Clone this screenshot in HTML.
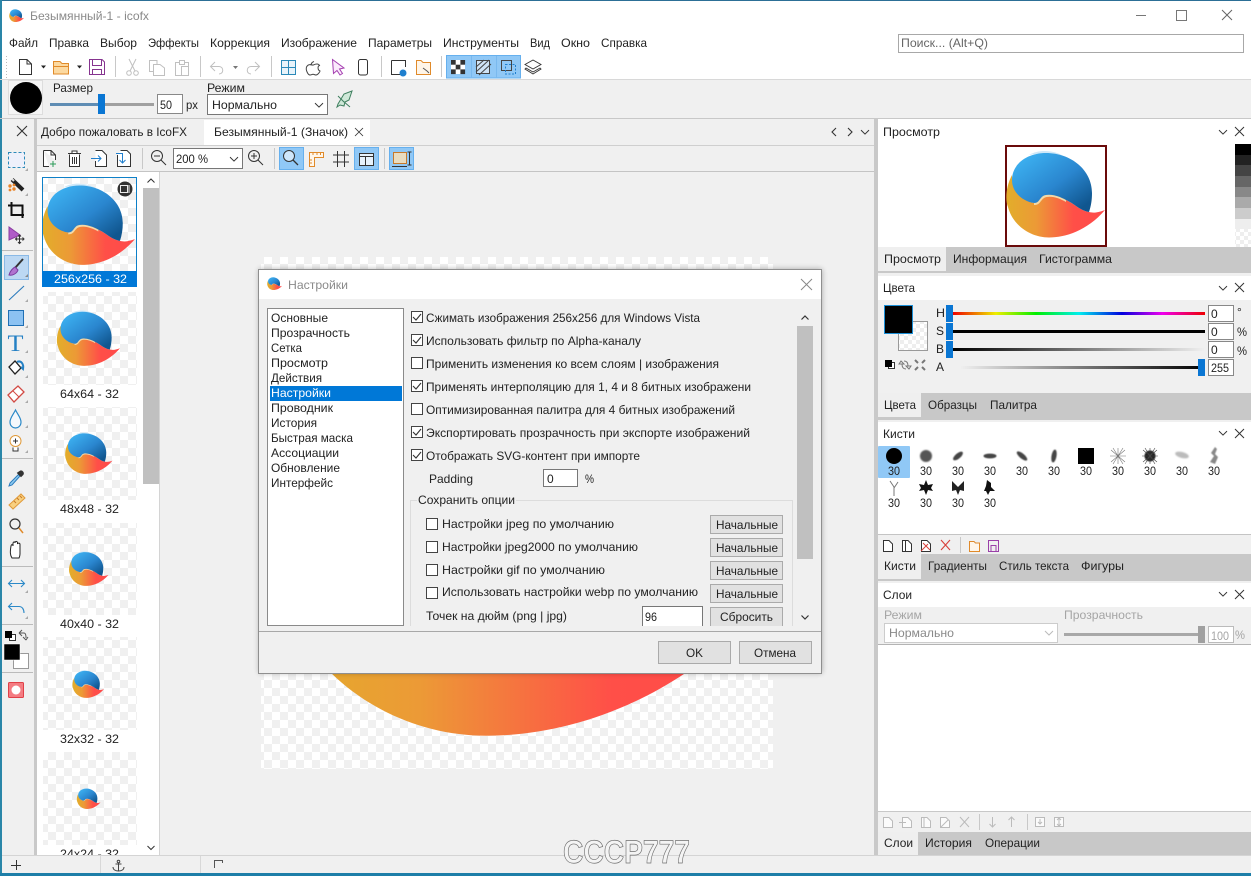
<!DOCTYPE html>
<html lang="ru"><head><meta charset="utf-8"><title>icofx</title>
<style>
html,body{margin:0;padding:0;background:#f0f0f0;overflow:hidden}
svg{display:block;position:absolute;left:0;top:0}
text{font-family:"Liberation Sans",sans-serif;font-size:12px;fill:#222;white-space:pre}
.g{fill:#a5a5a5}
.i{fill:none;stroke:#333;stroke-width:1}
</style></head><body>
<svg width="1251" height="876" viewBox="0 0 1251 876" xmlns="http://www.w3.org/2000/svg">
<defs>
<linearGradient id="bl" x1="0.1" y1="0.1" x2="0.9" y2="0.9"><stop offset="0" stop-color="#3cb0f0"/><stop offset=".55" stop-color="#2a86cf"/><stop offset="1" stop-color="#10568f"/></linearGradient>
<linearGradient id="or" x1="0" y1="0" x2="1" y2="0"><stop offset="0" stop-color="#e2ae2a"/><stop offset=".3" stop-color="#ec9a36"/><stop offset=".68" stop-color="#ff4f48"/><stop offset="1" stop-color="#ff4a4a"/></linearGradient>
<symbol id="logo" viewBox="0 0 100 100">
<path fill="url(#or)" d="M7 31C1 42 0 56 3 63C8 82 26 93.500 44 93.500C60 93.500 82 87 100 66C92 69 88 69 84 68C74 66 70 60 61 56C54 52 44 49 38 52C34 55 34 59 29 59C22 58 8 50 7 31Z"/>
<path fill="#f3d9a8" d="M29 59C34 59 34 55 38 52C44 49 54 52 61 56L61 58C54 54 45 51 39 54C35 57 35 61 29 61Z"/>
<path fill="#cfe8f8" d="M24 11C34 5 50 6 60 13C50 9 36 9 24 11Z"/>
<path fill="url(#bl)" d="M7 36C7 20 22 9 41 9C66 9 87 26 87 49C87 56 86 62 84 68C74 66 70 60 61 56C54 52 44 49 38 52C34 55 34 59 29 59C20 58 7 50 7 36Z"/>
</symbol>
<pattern id="ck" width="16" height="16" patternUnits="userSpaceOnUse"><rect width="16" height="16" fill="#fff"/><rect width="8" height="8" fill="#f0f0f0"/><rect x="8" y="8" width="8" height="8" fill="#f0f0f0"/></pattern>
<pattern id="ck2" width="16" height="16" patternUnits="userSpaceOnUse"><rect width="16" height="16" fill="#f0f0f0"/><rect x="8" width="8" height="8" fill="#fff"/><rect y="8" width="8" height="8" fill="#fff"/></pattern>
<pattern id="ck3" width="8" height="8" patternUnits="userSpaceOnUse"><rect width="8" height="8" fill="#fff"/><rect width="4" height="4" fill="#eee"/><rect x="4" y="4" width="4" height="4" fill="#eee"/></pattern>
<linearGradient id="rb"><stop offset="0" stop-color="#e00"/><stop offset=".17" stop-color="#ee0"/><stop offset=".33" stop-color="#0e0"/><stop offset=".5" stop-color="#0ee"/><stop offset=".67" stop-color="#00d"/><stop offset=".83" stop-color="#e0e"/><stop offset="1" stop-color="#e00"/></linearGradient>
<linearGradient id="bw"><stop offset="0" stop-color="#000"/><stop offset="1" stop-color="#f0f0f0"/></linearGradient>
<linearGradient id="wb"><stop offset="0" stop-color="#f0f0f0"/><stop offset="1" stop-color="#000"/></linearGradient>
<filter id="b1" x="-50%" y="-50%" width="200%" height="200%"><feGaussianBlur stdDeviation=".9"/></filter>
<filter id="b2" x="-50%" y="-50%" width="200%" height="200%"><feGaussianBlur stdDeviation=".5"/></filter>
<filter id="sh" x="-5%" y="-5%" width="110%" height="110%"><feGaussianBlur stdDeviation="3"/></filter>
<symbol id="chv" viewBox="0 0 10 6" overflow="visible"><path d="M0 0L5 5L10 0" fill="none" stroke="#333" stroke-width="1.2"/></symbol>
<symbol id="xx" viewBox="0 0 10 10" overflow="visible"><path d="M0 0L10 10M10 0L0 10" fill="none" stroke="#333" stroke-width="1.1"/></symbol>
<path id="doc" d="M.5 .5H8L12.5 5V15.5H.5ZM8 .5V5H12.5" fill="#fff" stroke="#333"/>
</defs>

<!-- window -->
<rect width="1251" height="876" fill="#f0f0f0"/>
<rect width="1251" height="79" fill="#fff"/>
<rect width="1251" height="1" fill="#2c6f96"/>
<rect y="0" width="2" height="876" fill="#2a86a8"/>
<rect y="873" width="1251" height="3" fill="#1d7ea8"/>

<!-- title -->
<use href="#logo" x="9" y="8" width="15" height="15"/>
<text x="30" y="20" fill="#8a8a8a" style="fill:#8a8a8a" textLength="119" lengthAdjust="spacingAndGlyphs">Безымянный-1 - icofx</text>
<path d="M1136 15.5H1146" stroke="#777"/>
<rect x="1176.5" y="10.5" width="10" height="10" fill="none" stroke="#777"/>
<path d="M1222 10L1232 20M1232 10L1222 20" stroke="#666" fill="none"/>

<!-- menu -->
<g>
<text x="9" y="47" textLength="29" lengthAdjust="spacingAndGlyphs">Файл</text>
<text x="49" y="47" textLength="40" lengthAdjust="spacingAndGlyphs">Правка</text>
<text x="100" y="47" textLength="37" lengthAdjust="spacingAndGlyphs">Выбор</text>
<text x="148" y="47" textLength="51" lengthAdjust="spacingAndGlyphs">Эффекты</text>
<text x="210" y="47" textLength="60" lengthAdjust="spacingAndGlyphs">Коррекция</text>
<text x="281" y="47" textLength="76" lengthAdjust="spacingAndGlyphs">Изображение</text>
<text x="368" y="47" textLength="64" lengthAdjust="spacingAndGlyphs">Параметры</text>
<text x="443" y="47" textLength="76" lengthAdjust="spacingAndGlyphs">Инструменты</text>
<text x="530" y="47" textLength="20" lengthAdjust="spacingAndGlyphs">Вид</text>
<text x="561" y="47" textLength="29" lengthAdjust="spacingAndGlyphs">Окно</text>
<text x="601" y="47" textLength="46" lengthAdjust="spacingAndGlyphs">Справка</text>
</g>
<rect x="898.5" y="34.5" width="345" height="18" fill="#fff" stroke="#a8a8a8"/>
<text x="901" y="47" style="fill:#666" textLength="87" lengthAdjust="spacingAndGlyphs">Поиск... (Alt+Q)</text>

<!-- main toolbar -->
<path d="M6.5 56V78" stroke="#bbb" stroke-dasharray="1 2"/>
<use href="#doc" x="19" y="59"/>
<path d="M41 65.500H46L43.500 68.500Z M77 65.500H82L79.500 68.500Z" fill="#222"/>
<path d="M53.500 61.500H60L62 63.500H68.500V74H53.500Z" fill="#fcd9a0" stroke="#e08a2a"/><path d="M53.500 66.500H68.500" stroke="#e08a2a"/>
<path d="M89.500 59.500H102L104.500 62V74.500H89.500Z" fill="#fff" stroke="#86348f"/><path d="M92.500 59.500V65.500H101.500V59.500M92.500 74.500V69.500H101.500V74.500" fill="none" stroke="#86348f"/>
<path d="M115.500 56V77M200.500 56V77M271.500 56V77M381.500 56V77M441.500 56V77" stroke="#c8c8c8"/>
<g fill="none" stroke="#c0c0c0"><path d="M129 59L135 71M136 59L130 71"/><circle cx="129" cy="73" r="2.300"/><circle cx="136" cy="73" r="2.300"/>
<path d="M149.500 60.500H157V71.500H149.500Z"/><path d="M153.500 64.500H160L164.500 68V75.500H153.500Z" fill="#fff"/>
<path d="M175.500 62.500H188.500V75.500H175.500Z"/><path d="M179.500 60.500H184.500V64.500H179.500ZM181.500 66.500H188.500V75.500H181.500Z" fill="#fff"/>
<path d="M215 62L210.500 66.500L215 71M211 66.500H219C224 66.500 224 74 219 74"/><path d="M255 62L259.500 66.500L255 71M259 66.500H251C246 66.500 246 74 251 74"/></g>
<path d="M233 66H238L235.500 69Z" fill="#777"/>
<g fill="none" stroke="#2b89b8"><rect x="281.500" y="60.500" width="14" height="14" fill="#e8f3fa"/><path d="M288.500 60.500V74.500M281.500 67.500H295.500"/></g>
<path d="M314 61.500C311 62.500 311 65 311 65.500M317 64C314 64 313.500 65.500 312.500 65C311 64.500 308 64 306.500 67C305.500 70 308 75 310 75C311.500 75 312 74.200 313 74.200C314 74.200 315 75 316 75C318 75 320 71.500 320 71C317.500 70 317.500 66 319.500 65.500C319 64.500 318 64 317 64Z" fill="#fff" stroke="#444"/>
<path d="M332.500 59.500L344 68L339.500 69L342.500 73.500L340 75L337 70.500L333.500 73.500Z" fill="#fbeafc" stroke="#a43fb0"/>
<rect x="358.500" y="59.500" width="9" height="15.500" rx="2" fill="#fff" stroke="#333"/>
<path d="M391.500 60.500H405.500V67M400 74.500H391.500V60.500" fill="#fff" stroke="#333"/><circle cx="403" cy="73" r="3.500" fill="#1f7fce"/>
<path d="M416.500 60.500H421L423 62.500H430.500V74.500H416.500Z" fill="#fff5e8" stroke="#e08a2a"/><path d="M423 68L427 71M427 71L429 73" stroke="#555" fill="none"/>
<rect x="446.500" y="55.500" width="74" height="22.500" fill="#90c8f6" stroke="#66b0ee"/>
<path d="M471.500 56V78M496.500 56V78" stroke="#7ab9ee"/>
<g fill="#333"><rect x="451" y="60" width="14" height="14" fill="#fff"/><rect x="451" y="60" width="4.700" height="4.700"/><rect x="460.400" y="60" width="4.700" height="4.700"/><rect x="455.700" y="64.700" width="4.700" height="4.700"/><rect x="451" y="69.400" width="4.700" height="4.700"/><rect x="460.400" y="69.400" width="4.700" height="4.700"/></g>
<path d="M476.500 60.500H489.500V73.500H476.500Z" fill="#cfe3f5" stroke="#444"/><path d="M476 72L489 60M479 75L491 64M476 67L484 60" stroke="#444" fill="none"/>
<path d="M501.500 60.500H511.500V70.500H501.500Z" fill="none" stroke="#444"/><rect x="505.500" y="64.500" width="10" height="9.500" fill="none" stroke="#1f7fce" stroke-dasharray="2 1.500"/>
<path d="M533 60L541 64.500L533 69L525 64.500ZM526 68L533 72L540 68L541 69L533 74L525 69Z" fill="#fff" stroke="#333" stroke-width=".9"/>
<rect y="79" width="1251" height="1" fill="#d8d8d8"/>

<!-- options bar -->
<rect x="8.500" y="80.500" width="34" height="34" fill="#f5f5f5" stroke="#ddd"/>
<circle cx="26" cy="98" r="16" fill="#000"/>
<text x="53" y="92" textLength="40" lengthAdjust="spacingAndGlyphs">Размер</text>
<rect x="50" y="103" width="50" height="3" fill="#5f8db4"/><rect x="100" y="103" width="54" height="3" fill="#a0a0a0"/>
<rect x="98" y="94" width="7" height="20" fill="#0a76d3"/>
<rect x="157.500" y="94.500" width="25" height="19" fill="#fff" stroke="#888"/>
<text x="160" y="109" textLength="12" lengthAdjust="spacingAndGlyphs">50</text>
<text x="186" y="109" textLength="12" lengthAdjust="spacingAndGlyphs">px</text>
<text x="207" y="92" textLength="38" lengthAdjust="spacingAndGlyphs">Режим</text>
<rect x="207.500" y="94.500" width="120" height="20" fill="#fff" stroke="#777"/>
<text x="212" y="109" textLength="65" lengthAdjust="spacingAndGlyphs">Нормально</text>
<use href="#chv" x="315" y="103" width="8" height="5"/>
<path d="M352 91L344 94L338 104L337 107L340 105L344 106L345 102L349 100ZM338 96L344 102M343 101L350 107" fill="#cfe8d8" stroke="#3f7f5f"/>
<rect y="118" width="1251" height="1" fill="#c8c8c8"/>

<!-- tabs row -->
<use href="#xx" x="17" y="126" width="10" height="10"/>
<rect x="34" y="119" width="3" height="736" fill="#c9c9c9"/>
<text x="41" y="136" textLength="146" lengthAdjust="spacingAndGlyphs">Добро пожаловать в IcoFX</text>
<rect x="204" y="120" width="166" height="25" fill="#fff"/>
<text x="214" y="136" textLength="134" lengthAdjust="spacingAndGlyphs">Безымянный-1 (Значок)</text>
<use href="#xx" x="355" y="128" width="8" height="8"/>
<path d="M836 128L832 132L836 136M848 128L852 132L848 136" fill="none" stroke="#333" stroke-width="1.100"/>
<use href="#chv" x="861" y="130" width="8" height="5"/>
<rect x="37" y="145" width="837" height="1" fill="#cfcfcf"/>

<!-- doc toolbar -->
<rect x="37" y="171" width="837" height="1" fill="#c4c4c4"/>
<path d="M43.500 150.500H51L55.500 155V160M51 150.500V155H55.500M49 166.500H43.500V150.500" fill="#fff" stroke="#333"/><path d="M53 161V167M50 164H56" stroke="#2a9a58" fill="none"/>
<path d="M69.500 154.500V166.500H79.500V154.500M68 153.500H81M72 153.500V151H77V153.500M72.500 157V164M74.500 157V164M76.500 157V164" fill="#fff" stroke="#333"/>
<path d="M95.500 150.500H102L106.500 155V166.500H95.500V161" fill="#fff" stroke="#333"/><path d="M91 158.500H101M98 155.500L101 158.500L98 161.500" fill="none" stroke="#1f7fce"/>
<path d="M120.500 150.500H127L130.500 154V166.500H117.500V155" fill="#fff" stroke="#333"/><path d="M116 153.500H122.500V163M119.500 160L122.500 163L125.500 160" fill="none" stroke="#1f7fce"/>
<path d="M142.500 148V169M274.500 148V169M384.500 148V169" stroke="#c8c8c8"/>
<circle cx="157" cy="156" r="5.500" fill="none" stroke="#333"/><path d="M161 160L166 165M154 156H160" stroke="#333" fill="none"/>
<rect x="173.500" y="148.500" width="69" height="20" fill="#fff" stroke="#777"/>
<text x="176" y="163" textLength="32" lengthAdjust="spacingAndGlyphs">200 %</text>
<use href="#chv" x="230" y="157" width="8" height="5"/>
<circle cx="254" cy="156" r="5.500" fill="none" stroke="#333"/><path d="M258 160L263 165M251 156H257M254 153V159" stroke="#333" fill="none"/>
<rect x="279.500" y="147.500" width="24" height="22" fill="#90c8f6" stroke="#66b0ee"/>
<circle cx="289" cy="156" r="5.500" fill="#cfe6fa" stroke="#333"/><path d="M293 160L298 165" stroke="#333" stroke-width="1.300"/>
<path d="M309.500 152.500H323.500V157.500H314.500V166.500H309.500Z" fill="#fff6ea" stroke="#e08a2a"/><path d="M313 152.500V155M317 152.500V155M320.500 152.500V155M309.500 160H312M309.500 163H312" stroke="#e08a2a"/>
<path d="M333 155H349M333 162H349M337.500 151V167M344.500 151V167" stroke="#333" fill="none"/>
<rect x="354.500" y="147.500" width="24" height="22" fill="#90c8f6" stroke="#66b0ee"/>
<path d="M359.500 153.500H373.500V165.500H359.500Z" fill="#e6f2fc" stroke="#333"/><path d="M359.500 156.500H373.500M365.500 156.500V165.500" stroke="#333"/>
<rect x="389.500" y="147.500" width="24" height="22" fill="#90c8f6" stroke="#66b0ee"/>
<rect x="393.500" y="152.500" width="13" height="11" fill="#e8dcc0" stroke="#c87a2a"/><path d="M409.500 152V165M407.500 152H411.500M407.500 165H411.500M392 166.500H407" stroke="#333" fill="none"/>

<!-- left tools -->
<rect x="8.500" y="152.500" width="16" height="15" fill="#eef0fb" stroke="#2b89b8" stroke-dasharray="3 2"/>
<path d="M25 171L28 168V171Z M25 196L28 193V196Z" fill="#aaa"/>
<path d="M12 179.500L23 190" stroke="#222" stroke-width="4"/><path d="M12 179L14 181" stroke="#ddd" stroke-width="2"/><circle cx="10" cy="186" r="1.700" fill="#e8842a"/><circle cx="14" cy="185" r="1.400" fill="#e8842a"/><circle cx="10" cy="190" r="1.400" fill="#e8842a"/><circle cx="14" cy="189" r="1.700" fill="#e8842a"/>
<path d="M11.500 202V215H24M8 205.500H22.500V218" fill="none" stroke="#111" stroke-width="2"/>
<path d="M9 227L9 240L20 235Z" fill="#b05cc8" stroke="#8a3ca0"/><path d="M15.500 239H24M19.500 235V243.500M17 237.500L15.500 239L17 240.500M22.500 237.500L24 239L22.500 240.500M18 236.500L19.500 235L21 236.500M18 242L19.500 243.500L21 242" stroke="#333" fill="none"/>
<path d="M2 250.500H33" stroke="#bbb"/>
<rect x="4.500" y="255.500" width="24" height="24" fill="#bcd8f3" stroke="#8ab9e6"/>
<path d="M23 259L15 268" stroke="#333" stroke-width="2"/><path d="M9 275C10 271 13 268 15 267L18 270C17 273 13 276 9 275Z" fill="#b073d0" stroke="#7a3b9e"/>
<path d="M25 277L28 274V277Z" fill="#888"/>
<path d="M9 300L24 286" stroke="#2b7bbd" stroke-width="1.100"/><path d="M25 302L28 299V302Z M25 328L28 325V328Z M25 353L28 350V353Z M25 378L28 375V378Z M25 403L28 400V403Z M25 428L28 425V428Z M25 453L28 450V453Z" fill="#aaa"/>
<rect x="8.500" y="310.500" width="15" height="15" fill="#8cc2f2" stroke="#1f6fb4"/>
<text x="7.500" y="351" style="font-family:'Liberation Serif',serif;font-size:23px;fill:#2480c4" textLength="16" lengthAdjust="spacingAndGlyphs">T</text>
<path d="M9 367L15 361L21 368L15 374Z" fill="#fff" stroke="#222" stroke-width="1.300"/><path d="M17 362C21 360 24 364 23 369L21 367" fill="none" stroke="#2480c4" stroke-width="2"/>
<path d="M8 395L18 386L24 392L14 402Z" fill="#fff" stroke="#d24a44" stroke-width="1.300"/><path d="M13 391L19 397" stroke="#d24a44"/>
<path d="M15.500 410C13 415 10 418 10 422C10 426 13 428 15.500 428C18 428 21 426 21 422C21 418 18 415 15.500 410Z" fill="#f4f8fc" stroke="#2b89c8" stroke-width="1.200"/>
<circle cx="15.500" cy="441" r="5.500" fill="#fff" stroke="#e09a3a"/><path d="M13 447.500V451H18V447.500" fill="#fff" stroke="#333"/><path d="M13 441H18M15.500 438.500V443.500" stroke="#333"/>
<path d="M2 458.500H33" stroke="#bbb"/>
<path d="M10 483L9 486L12 485L20 476L18.500 474.500Z" fill="#8ecaf0" stroke="#2b7bbd"/><path d="M17.500 473L21 476.500L23 474.500C24 473 22.500 470.500 20.500 471Z" fill="#333" stroke="#333"/>
<path d="M9 505L21 494L25 498L13 509Z" fill="#f8d080" stroke="#e09a3a"/><path d="M14 501L16 503M17 498L19 500M20 496L22 498" stroke="#c87a2a"/>
<circle cx="15" cy="524" r="5" fill="none" stroke="#333" stroke-width="1.200"/><path d="M19 528L23 533" stroke="#e08a2a" stroke-width="1.500"/>
<path d="M12 558C10 555 10 552 11 546C11.500 544 13 544.500 13 546V543C13.500 541.500 15 541.500 15 543V542.500C15.500 541 17 541 17.500 542.500V544C18 542.500 20 543 20 544.500V554C20 556 19.500 557 19 558Z" fill="#fff" stroke="#222"/>
<path d="M2 566.500H33" stroke="#bbb"/>
<path d="M9 583.500H24M12 580L8.500 583.500L12 587M21 580L24.500 583.500L21 587" fill="none" stroke="#2b89c8" stroke-width="1.100"/><path d="M25 593L28 590V593Z M25 619L28 616V619Z" fill="#aaa"/>
<path d="M12 603L8.500 606.500L12 610M9 606.500H19C22 606.500 24 609 24 613" fill="none" stroke="#2b89c8" stroke-width="1.100"/>
<path d="M2 624.500H33" stroke="#bbb"/>
<rect x="9.500" y="634.500" width="6" height="6" fill="#fff" stroke="#333"/><rect x="5" y="631" width="7" height="7" fill="#000"/>
<path d="M19 633L22 630M19 633L22 636M19 633H24C26 633 26 636 26 638M26 640L23 637M26 640L28 637" stroke="#555" fill="none"/>
<rect x="13.500" y="653.500" width="15" height="15" fill="#fff" stroke="#999"/>
<rect x="4" y="644" width="16" height="16" fill="#000" stroke="#fff" stroke-width=".5"/>
<path d="M2 672.500H33" stroke="#bbb"/>
<rect x="8.500" y="682.500" width="15" height="15" rx="1" fill="#f47c82" stroke="#e04048"/><circle cx="16" cy="690" r="4.500" fill="#fff"/>

<!-- thumbs list -->
<rect x="37" y="172" width="122" height="683" fill="#fff"/>
<rect x="159" y="172" width="1" height="683" fill="#d4d4d4"/>
<rect x="143" y="188" width="16" height="296" fill="#c0c0c0"/>
<path d="M147.500 182.500L151 179L154.500 182.500M147.500 846L151 849.500L154.500 846" fill="none" stroke="#333"/>
<rect x="43" y="178" width="94" height="93" fill="url(#ck)"/>
<use href="#logo" x="41" y="177" width="94" height="94"/>
<rect x="42.500" y="177.500" width="94" height="109" fill="none" stroke="#0e80c8"/>
<rect x="42" y="271" width="95" height="16" fill="#0078d7"/>
<text x="54" y="283" style="fill:#fff" textLength="73" lengthAdjust="spacingAndGlyphs">256x256 - 32</text>
<circle cx="125" cy="189" r="7.500" fill="#333"/><rect x="120.500" y="185.500" width="7" height="7" fill="none" stroke="#eee"/><path d="M129 185V193" stroke="#eee"/>
<rect x="43" y="292" width="94" height="93" fill="url(#ck)"/>
<use href="#logo" x="56" y="306" width="64" height="64"/>
<text x="60" y="398" textLength="59" lengthAdjust="spacingAndGlyphs">64x64 - 32</text>
<rect x="43" y="407" width="94" height="93" fill="url(#ck)"/>
<use href="#logo" x="64.500" y="429" width="48" height="48"/>
<text x="60" y="513" textLength="59" lengthAdjust="spacingAndGlyphs">48x48 - 32</text>
<rect x="43" y="523" width="94" height="92" fill="url(#ck)"/>
<use href="#logo" x="68.500" y="548.500" width="40" height="40"/>
<text x="60" y="628" textLength="59" lengthAdjust="spacingAndGlyphs">40x40 - 32</text>
<rect x="43" y="637" width="94" height="93" fill="url(#ck)"/>
<use href="#logo" x="72" y="668" width="32" height="32"/>
<text x="60" y="743" textLength="59" lengthAdjust="spacingAndGlyphs">32x32 - 32</text>
<rect x="43" y="752" width="94" height="93" fill="url(#ck)"/>
<use href="#logo" x="76.500" y="786.500" width="24" height="24"/>
<text x="60" y="858" textLength="59" lengthAdjust="spacingAndGlyphs">24x24 - 32</text>

<!-- canvas -->
<rect x="160" y="172" width="714" height="683" fill="#f0f0f0"/>
<rect x="261" y="257" width="512" height="512" fill="url(#ck2)"/>
<use href="#logo" x="261" y="257" width="512" height="512"/>

<!-- dialog -->
<rect x="259" y="269" width="563" height="404" fill="#000" opacity=".3" filter="url(#sh)"/>
<rect x="258.500" y="269.500" width="563" height="404" fill="#f0f0f0" stroke="#8f8f8f"/>
<rect x="259" y="270" width="562" height="29" fill="#fff"/>
<use href="#logo" x="267" y="276" width="15" height="15"/>
<text x="288" y="289" style="fill:#8a8a8a" textLength="60" lengthAdjust="spacingAndGlyphs">Настройки</text>
<path d="M801 279L812 290M812 279L801 290" stroke="#888" fill="none"/>
<rect x="267.500" y="308.500" width="136" height="317" fill="#fff" stroke="#8a8a8a"/>
<rect x="270" y="386" width="132" height="15" fill="#0078d7"/>
<text x="271" y="322" textLength="57" lengthAdjust="spacingAndGlyphs">Основные</text>
<text x="271" y="337" textLength="79" lengthAdjust="spacingAndGlyphs">Прозрачность</text>
<text x="271" y="352" textLength="31" lengthAdjust="spacingAndGlyphs">Сетка</text>
<text x="271" y="367" textLength="57" lengthAdjust="spacingAndGlyphs">Просмотр</text>
<text x="271" y="382" textLength="51" lengthAdjust="spacingAndGlyphs">Действия</text>
<text x="271" y="397" style="fill:#fff" textLength="60" lengthAdjust="spacingAndGlyphs">Настройки</text>
<text x="271" y="412" textLength="62" lengthAdjust="spacingAndGlyphs">Проводник</text>
<text x="271" y="427" textLength="46" lengthAdjust="spacingAndGlyphs">История</text>
<text x="271" y="442" textLength="82" lengthAdjust="spacingAndGlyphs">Быстрая маска</text>
<text x="271" y="457" textLength="68" lengthAdjust="spacingAndGlyphs">Ассоциации</text>
<text x="271" y="472" textLength="69" lengthAdjust="spacingAndGlyphs">Обновление</text>
<text x="271" y="487" textLength="62" lengthAdjust="spacingAndGlyphs">Интерфейс</text>

<g fill="#fff" stroke="#444">
<rect x="411.500" y="311.500" width="11" height="11"/><rect x="411.500" y="334.500" width="11" height="11"/><rect x="411.500" y="357.500" width="11" height="11"/><rect x="411.500" y="380.500" width="11" height="11"/><rect x="411.500" y="403.500" width="11" height="11"/><rect x="411.500" y="426.500" width="11" height="11"/><rect x="411.500" y="449.500" width="11" height="11"/>
<rect x="426.500" y="518.500" width="11" height="11"/><rect x="426.500" y="541.500" width="11" height="11"/><rect x="426.500" y="564.500" width="11" height="11"/><rect x="426.500" y="587.500" width="11" height="11"/>
</g>
<g fill="none" stroke="#333" stroke-width="1.100"><path d="M413 317L416 320L421 314"/><path d="M413 340L416 343L421 337"/><path d="M413 386L416 389L421 383"/><path d="M413 432L416 435L421 429"/><path d="M413 455L416 458L421 452"/></g>
<text x="426" y="322" textLength="274" lengthAdjust="spacingAndGlyphs">Сжимать изображения 256x256 для Windows Vista</text>
<text x="426" y="345" textLength="215" lengthAdjust="spacingAndGlyphs">Использовать фильтр по Alpha-каналу</text>
<text x="426" y="368" textLength="293" lengthAdjust="spacingAndGlyphs">Применить изменения ко всем слоям | изображения</text>
<text x="426" y="391" textLength="325" lengthAdjust="spacingAndGlyphs">Применять интерполяцию для 1, 4 и 8 битных изображени</text>
<text x="426" y="414" textLength="309" lengthAdjust="spacingAndGlyphs">Оптимизированная палитра для 4 битных изображений</text>
<text x="426" y="437" textLength="324" lengthAdjust="spacingAndGlyphs">Экспортировать прозрачность при экспорте изображений</text>
<text x="426" y="460" textLength="214" lengthAdjust="spacingAndGlyphs">Отображать SVG-контент при импорте</text>
<text x="429" y="483" textLength="44" lengthAdjust="spacingAndGlyphs">Padding</text>
<rect x="543.500" y="469.500" width="34" height="17" fill="#fff" stroke="#777"/>
<text x="547" y="483">0</text>
<text x="585" y="483" textLength="9" lengthAdjust="spacingAndGlyphs">%</text>
<path d="M410.500 626V500.500H417M516 500.500H792.500V626" fill="none" stroke="#dcdcdc"/>
<text x="418" y="504" textLength="97" lengthAdjust="spacingAndGlyphs">Сохранить опции</text>
<text x="442" y="528" textLength="172" lengthAdjust="spacingAndGlyphs">Настройки jpeg по умолчанию</text>
<text x="442" y="551" textLength="196" lengthAdjust="spacingAndGlyphs">Настройки jpeg2000 по умолчанию</text>
<text x="442" y="574" textLength="163" lengthAdjust="spacingAndGlyphs">Настройки gif по умолчанию</text>
<text x="442" y="596" textLength="256" lengthAdjust="spacingAndGlyphs">Использовать настройки webp по умолчанию</text>
<text x="426" y="620" textLength="141" lengthAdjust="spacingAndGlyphs">Точек на дюйм (png | jpg)</text>
<g fill="#e1e1e1" stroke="#aaa">
<rect x="710.500" y="515.500" width="72" height="18"/><rect x="710.500" y="538.500" width="72" height="18"/><rect x="710.500" y="561.500" width="72" height="18"/><rect x="710.500" y="584.500" width="72" height="18"/><rect x="710.500" y="607.500" width="72" height="19"/>
</g>
<text x="716" y="529" textLength="62" lengthAdjust="spacingAndGlyphs">Начальные</text>
<text x="716" y="552" textLength="62" lengthAdjust="spacingAndGlyphs">Начальные</text>
<text x="716" y="575" textLength="62" lengthAdjust="spacingAndGlyphs">Начальные</text>
<text x="716" y="598" textLength="62" lengthAdjust="spacingAndGlyphs">Начальные</text>
<text x="720" y="621" textLength="53" lengthAdjust="spacingAndGlyphs">Сбросить</text>
<rect x="642.500" y="606.500" width="60" height="20" fill="#fff" stroke="#777"/>
<text x="645" y="621" textLength="12" lengthAdjust="spacingAndGlyphs">96</text>
<rect x="797" y="326" width="16" height="233" fill="#c0c0c0"/>
<path d="M801.500 319.500L805 316L808.500 319.500M801.500 615.500L805 619L808.500 615.500" fill="none" stroke="#333" stroke-width="1.200"/>
<rect x="259" y="626" width="562" height="5" fill="#f0f0f0"/>
<rect x="259" y="631" width="562" height="1" fill="#a8a8a8"/>
<rect x="658.500" y="641.500" width="72" height="22" fill="#e1e1e1" stroke="#aaa"/>
<rect x="739.500" y="641.500" width="72" height="22" fill="#e1e1e1" stroke="#aaa"/>
<text x="686" y="657" textLength="17" lengthAdjust="spacingAndGlyphs">OK</text>
<text x="754" y="657" textLength="42" lengthAdjust="spacingAndGlyphs">Отмена</text>

<!-- right side -->
<rect x="874" y="119" width="4" height="736" fill="#c9c9c9"/>
<rect x="878" y="119" width="373" height="128" fill="#fff"/>
<text x="883" y="136" textLength="57" lengthAdjust="spacingAndGlyphs">Просмотр</text>
<use href="#chv" x="1219" y="130" width="8" height="5"/><use href="#xx" x="1235" y="127" width="9" height="9"/>
<rect x="1006" y="146" width="100" height="100" fill="#fff" stroke="#6a0a0a" stroke-width="2"/>
<use href="#logo" x="1005" y="144" width="100" height="100"/>
<g><rect x="1235" y="144" width="16" height="11" fill="#000"/><rect x="1235" y="155" width="16" height="10" fill="#222"/><rect x="1235" y="165" width="16" height="11" fill="#444"/><rect x="1235" y="176" width="16" height="11" fill="#666"/><rect x="1235" y="187" width="16" height="10" fill="#888"/><rect x="1235" y="197" width="16" height="11" fill="#aaa"/><rect x="1235" y="208" width="16" height="11" fill="#ccc"/><rect x="1235" y="219" width="16" height="10" fill="#eee"/><rect x="1235" y="229" width="16" height="18" fill="url(#ck3)"/></g>
<rect x="878" y="247" width="373" height="26" fill="#c8c8c8"/>
<rect x="878" y="247" width="68" height="24" fill="#efefef"/>
<text x="884" y="263" textLength="57" lengthAdjust="spacingAndGlyphs">Просмотр</text>
<text x="953" y="263" textLength="74" lengthAdjust="spacingAndGlyphs">Информация</text>
<text x="1039" y="263" textLength="73" lengthAdjust="spacingAndGlyphs">Гистограмма</text>

<rect x="878" y="276" width="373" height="24" fill="#fff"/>
<text x="883" y="292" textLength="32" lengthAdjust="spacingAndGlyphs">Цвета</text>
<use href="#chv" x="1219" y="286" width="8" height="5"/><use href="#xx" x="1235" y="283" width="9" height="9"/>
<rect x="898.500" y="321.500" width="29" height="29" fill="url(#ck3)" stroke="#999"/>
<rect x="884.500" y="305.500" width="28" height="28" fill="#000" stroke="#1c8fd6"/>
<rect x="888.500" y="362.500" width="6" height="6" fill="#fff" stroke="#333"/><rect x="885" y="360" width="7" height="7" fill="#000"/>
<path d="M901 361L904 364H899ZM909 369L906 366H911ZM902 364C902 368 904 369 906 369M908 366C908 362 906 361 904 361" fill="none" stroke="#777"/>
<path d="M915 360L918 363M925 360L922 363M915 370L918 367M925 370L922 367" stroke="#777" stroke-width="2" fill="none"/>
<text x="936" y="317" textLength="9" lengthAdjust="spacingAndGlyphs">H</text>
<text x="936" y="335" textLength="8" lengthAdjust="spacingAndGlyphs">S</text>
<text x="936" y="353" textLength="8" lengthAdjust="spacingAndGlyphs">B</text>
<text x="936" y="371" textLength="8" lengthAdjust="spacingAndGlyphs">A</text>
<rect x="953" y="312" width="252" height="3" fill="url(#rb)"/>
<rect x="953" y="330" width="252" height="3" fill="#000"/>
<rect x="953" y="348" width="252" height="3" fill="url(#bw)"/>
<rect x="960" y="366" width="245" height="3" fill="url(#wb)"/>
<rect x="946" y="305" width="7" height="17" fill="#0a76d3"/><rect x="946" y="323" width="7" height="17" fill="#0a76d3"/><rect x="946" y="341" width="7" height="17" fill="#0a76d3"/><rect x="1198" y="359" width="7" height="17" fill="#0a76d3"/>
<g fill="#fff" stroke="#888"><rect x="1208.500" y="305.500" width="25" height="16"/><rect x="1208.500" y="323.500" width="25" height="16"/><rect x="1208.500" y="341.500" width="25" height="16"/><rect x="1208.500" y="359.500" width="25" height="16"/></g>
<text x="1211" y="318">0</text><text x="1211" y="336">0</text><text x="1211" y="354">0</text><text x="1211" y="372" textLength="18" lengthAdjust="spacingAndGlyphs">255</text>
<text x="1237" y="316">°</text><text x="1237" y="336" textLength="10" lengthAdjust="spacingAndGlyphs">%</text><text x="1237" y="355" textLength="10" lengthAdjust="spacingAndGlyphs">%</text>
<rect x="878" y="393" width="373" height="27" fill="#c8c8c8"/>
<rect x="878" y="393" width="43" height="24" fill="#efefef"/>
<text x="884" y="409" textLength="32" lengthAdjust="spacingAndGlyphs">Цвета</text>
<text x="928" y="409" textLength="49" lengthAdjust="spacingAndGlyphs">Образцы</text>
<text x="990" y="409" textLength="47" lengthAdjust="spacingAndGlyphs">Палитра</text>

<rect x="878" y="422" width="373" height="112" fill="#fff"/>
<text x="883" y="438" textLength="32" lengthAdjust="spacingAndGlyphs">Кисти</text>
<use href="#chv" x="1219" y="431" width="8" height="5"/><use href="#xx" x="1235" y="429" width="9" height="9"/>
<rect x="878" y="446" width="32" height="32" rx="1" fill="#90c8f6"/>
<circle cx="894" cy="456" r="8" fill="#000"/>
<circle cx="926" cy="456" r="6" fill="#555" filter="url(#b1)"/>
<ellipse cx="958" cy="456" rx="6" ry="2.600" fill="#444" transform="rotate(-40 958 456)" filter="url(#b2)"/>
<ellipse cx="990" cy="456" rx="6.500" ry="2.400" fill="#444" filter="url(#b2)"/>
<ellipse cx="1022" cy="456" rx="6.500" ry="2.500" fill="#444" transform="rotate(40 1022 456)" filter="url(#b2)"/>
<ellipse cx="1054" cy="456" rx="2.500" ry="6.500" fill="#444" transform="rotate(10 1054 456)" filter="url(#b2)"/>
<rect x="1078" y="448" width="16" height="16" fill="#000"/>
<g fill="none" stroke="#777" stroke-width=".6"><path d="M1111 450L1125 462M1125 450L1111 462M1118 448V464M1110 456H1126M1113 448L1123 464M1123 448L1113 464"/></g>
<circle cx="1150" cy="456" r="5.500" fill="#222" filter="url(#b2)"/><path d="M1143 450L1157 462M1157 450L1143 462M1150 448V464M1142 456H1158M1145 448L1155 464M1155 448L1145 464" fill="none" stroke="#444" stroke-width=".6"/>
<ellipse cx="1182" cy="455" rx="7" ry="3" fill="#bbb" transform="rotate(15 1182 455)" filter="url(#b1)"/>
<path d="M1215 447L1211 453L1214 456L1210 462L1215 464L1218 457L1215 454L1217 449Z" fill="#888" filter="url(#b2)"/>
<path d="M894 496V487L890 481M894 488L898 482" stroke="#777" fill="none"/>
<path d="M926 480L928 485L933 484L931 488L933 491L928 490L926 495L924 490L919 491L921 488L919 484L924 485Z" fill="#111"/>
<path d="M958 487L952 481L952 491L956 490L958 495L960 490L964 491L964 481Z" fill="#222"/>
<path d="M987 480L991 483L991 487L995 491L990 491L988 495L986 491L984 491L986 486Z" fill="#111"/>
<g><text x="888" y="475" textLength="12" lengthAdjust="spacingAndGlyphs">30</text><text x="920" y="475" textLength="12" lengthAdjust="spacingAndGlyphs">30</text><text x="952" y="475" textLength="12" lengthAdjust="spacingAndGlyphs">30</text><text x="984" y="475" textLength="12" lengthAdjust="spacingAndGlyphs">30</text><text x="1016" y="475" textLength="12" lengthAdjust="spacingAndGlyphs">30</text><text x="1048" y="475" textLength="12" lengthAdjust="spacingAndGlyphs">30</text><text x="1080" y="475" textLength="12" lengthAdjust="spacingAndGlyphs">30</text><text x="1112" y="475" textLength="12" lengthAdjust="spacingAndGlyphs">30</text><text x="1144" y="475" textLength="12" lengthAdjust="spacingAndGlyphs">30</text><text x="1176" y="475" textLength="12" lengthAdjust="spacingAndGlyphs">30</text><text x="1208" y="475" textLength="12" lengthAdjust="spacingAndGlyphs">30</text>
<text x="888" y="507" textLength="12" lengthAdjust="spacingAndGlyphs">30</text><text x="920" y="507" textLength="12" lengthAdjust="spacingAndGlyphs">30</text><text x="952" y="507" textLength="12" lengthAdjust="spacingAndGlyphs">30</text><text x="984" y="507" textLength="12" lengthAdjust="spacingAndGlyphs">30</text></g>
<rect x="878" y="534" width="373" height="1" fill="#c4c4c4"/>
<path d="M883.500 540.500H889L892.500 544V551.500H883.500Z" fill="#fff" stroke="#333"/>
<path d="M902.500 540.500H908L911.500 544V551.500H902.500ZM905.500 540.500V551.500" fill="#fff" stroke="#333"/>
<path d="M921.500 540.500H927L930.500 544V551.500H921.500Z" fill="#fff" stroke="#333"/><path d="M921 551L928 544M923 543L930 550" stroke="#d8403a"/>
<path d="M941 540L950 550M950 540L941 550" stroke="#d8403a" stroke-width="1.100" fill="none"/>
<path d="M960.500 537V553" stroke="#c8c8c8"/>
<path d="M969.500 541.500H974L975.500 543H979.500V551.500H969.500Z" fill="#fff6ea" stroke="#e08a2a"/>
<path d="M988.500 540.500H998.500V551.500H988.500ZM991 545.500H996V551.500H991Z" fill="none" stroke="#9a3fa8"/>
<rect x="878" y="554" width="373" height="27" fill="#c8c8c8"/>
<rect x="878" y="554" width="43" height="25" fill="#efefef"/>
<text x="884" y="570" textLength="32" lengthAdjust="spacingAndGlyphs">Кисти</text>
<text x="928" y="570" textLength="59" lengthAdjust="spacingAndGlyphs">Градиенты</text>
<text x="999" y="570" textLength="70" lengthAdjust="spacingAndGlyphs">Стиль текста</text>
<text x="1081" y="570" textLength="43" lengthAdjust="spacingAndGlyphs">Фигуры</text>

<rect x="878" y="583" width="373" height="24" fill="#fff"/>
<text x="883" y="599" textLength="29" lengthAdjust="spacingAndGlyphs">Слои</text>
<use href="#chv" x="1219" y="592" width="8" height="5"/><use href="#xx" x="1235" y="590" width="9" height="9"/>
<text x="884" y="619" class="g" textLength="38" lengthAdjust="spacingAndGlyphs">Режим</text>
<text x="1064" y="619" class="g" textLength="79" lengthAdjust="spacingAndGlyphs">Прозрачность</text>
<rect x="884.500" y="623.500" width="173" height="19" fill="#fff" stroke="#ccc"/>
<text x="889" y="637" style="fill:#8a8a8a" textLength="65" lengthAdjust="spacingAndGlyphs">Нормально</text>
<path d="M1045 631L1049 635L1053 631" fill="none" stroke="#bbb"/>
<rect x="1064" y="633" width="141" height="3" fill="#a8a8a8"/><rect x="1198" y="626" width="7" height="17" fill="#a0a0a0"/>
<rect x="1208.500" y="626.500" width="25" height="16" fill="#fff" stroke="#bbb"/>
<text x="1211" y="640" class="g" textLength="18" lengthAdjust="spacingAndGlyphs">100</text>
<text x="1235" y="639" class="g" textLength="10" lengthAdjust="spacingAndGlyphs">%</text>
<rect x="878" y="644" width="373" height="1" fill="#b4b4b4"/>
<rect x="878" y="645" width="373" height="166" fill="#fff"/>
<rect x="878" y="811" width="373" height="1" fill="#c8c8c8"/>
<g fill="#fbfbfb" stroke="#bbb">
<path d="M883.500 817.500H889L892.500 821V827.500H883.500Z"/><path d="M902.500 817.500H908L911.500 821V827.500H902.500ZM899 822.500H906"/>
<path d="M921.500 817.500H927L930.500 821V827.500H921.500ZM924 817.500V827.500"/><path d="M940.500 817.500H946L949.500 821V827.500H940.500ZM941 827L948 820"/>
<path d="M960 817L969 827M969 817L960 827" fill="none"/><path d="M979.500 814V830M1027.500 814V830" fill="none" stroke="#c8c8c8"/>
<path d="M992.500 817V827M989.500 824L992.500 827L995.500 824M1011.500 817V827M1008.500 820L1011.500 817L1014.500 820" fill="none"/>
<rect x="1035.500" y="817.500" width="9" height="9"/><path d="M1040 819V824M1038 822L1040 824L1042 822" fill="none"/>
<rect x="1054.500" y="817.500" width="9" height="9"/><path d="M1059 818V826M1057 820L1059 818L1061 820M1057 824L1059 826L1061 824" fill="none"/>
</g>
<rect x="878" y="832" width="373" height="23" fill="#c8c8c8"/>
<rect x="878" y="832" width="40" height="23" fill="#efefef"/>
<text x="884" y="847" textLength="29" lengthAdjust="spacingAndGlyphs">Слои</text>
<text x="925" y="847" textLength="47" lengthAdjust="spacingAndGlyphs">История</text>
<text x="985" y="847" textLength="55" lengthAdjust="spacingAndGlyphs">Операции</text>

<!-- status bar -->
<rect x="2" y="855" width="1249" height="18" fill="#f0f0f0"/>
<rect x="2" y="855" width="1249" height="1" fill="#d4d4d4"/>
<path d="M11 865.500H21M16.500 860V870" stroke="#333" fill="none"/>
<path d="M100.500 856V873M200.500 856V873" stroke="#d8d8d8"/>
<path d="M118.500 863V871M115.500 864H121.500M113 867C113 870 116 871 118.500 871C121 871 124 870 124 867" stroke="#444" fill="none"/><circle cx="118.500" cy="861.500" r="1.300" fill="none" stroke="#444"/>
<path d="M214.500 868V860.500H222.500V863M214.500 860.500" stroke="#555" fill="none"/>

<!-- watermark -->
<text x="563" y="863" style="font-size:32px;font-weight:bold;fill:#f4f4f4;stroke:#707070;stroke-width:.7;font-family:'Liberation Sans',sans-serif" textLength="127" lengthAdjust="spacingAndGlyphs">CCCP777</text>
</svg>
</body></html>
